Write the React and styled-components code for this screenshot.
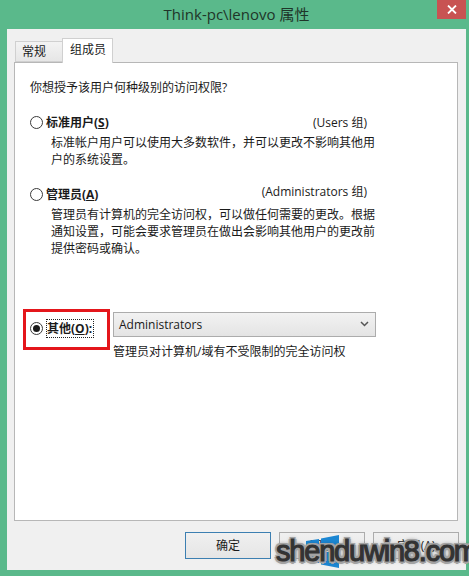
import React from "react";
import styled, { createGlobalStyle } from "styled-components";

const Global = createGlobalStyle`
  html, body { margin: 0; padding: 0; background: #5ab98b; }
  #root { width: 469px; height: 576px; }
`;

const FONT = `"Open Sans", "Noto Sans CJK SC", sans-serif`;

const Window = styled.div`
  position: relative;
  width: 469px;
  height: 576px;
  box-sizing: border-box;
  padding: 0 3px 6px 7px;
  background: #5ab98b;
  display: flex;
  flex-direction: column;
  font-family: ${FONT};
  font-size: 12px;
  color: #1a1a1a;
  overflow: hidden;
`;

const TitleBar = styled.div`
  height: 29px;
  flex: none;
  display: grid;
  grid-template-columns: 1fr auto 1fr;
  align-items: start;
`;

const Title = styled.div`
  grid-column: 2;
  font-size: 15px;
  line-height: 29px;
  color: #1f3529;
  white-space: nowrap;
`;

const CloseButton = styled.div`
  grid-column: 3;
  justify-self: end;
  width: 29px;
  height: 19px;
  background: #c85352;
  display: flex;
  align-items: center;
  justify-content: center;
`;

const Client = styled.div`
  flex: 1;
  background: #f0f0f0;
  display: flex;
  flex-direction: column;
  padding: 9px 7px 11px 7px;
  min-height: 0;
`;

const TabBar = styled.div`
  height: 24px;
  flex: none;
  display: flex;
  align-items: flex-end;
  padding-left: 1px;
`;

const Tab = styled.div`
  box-sizing: border-box;
  position: relative;
  z-index: ${(p) => (p.$active ? 1 : 0)};
  height: ${(p) => (p.$active ? 25 : 21)}px;
  width: ${(p) => (p.$active ? 51 : 47)}px;
  margin-bottom: ${(p) => (p.$active ? -1 : 0)}px;
  padding: ${(p) => (p.$active ? "2px 0 0 7px" : "1px 0 0 6px")};
  border: 1px solid #d0d0d0;
  border-right: ${(p) => (p.$active ? "1px solid #d0d0d0" : "none")};
  border-bottom: ${(p) => (p.$active ? "none" : "1px solid #d0d0d0")};
  background: ${(p) => (p.$active ? "#ffffff" : "linear-gradient(#f3f3f3, #e6e6e6)")};
  line-height: 17px;
  white-space: nowrap;
`;

const Panel = styled.div`
  flex: 1;
  background: #ffffff;
  border: 1px solid #b7b7b7;
  margin-right: 1px;
  padding: 16px 0 0 15px;
  display: flex;
  flex-direction: column;
  align-items: flex-start;
`;

const Question = styled.div`
  line-height: 17px;
`;

const OptionRow = styled.div`
  margin-top: 18px;
  width: 337px;
  display: flex;
  justify-content: space-between;
  align-items: center;
  line-height: 17px;
`;

const RadioLabel = styled.label`
  display: flex;
  align-items: center;
  gap: 3px;
  font-weight: 700;
  white-space: nowrap;
`;

const RadioCircle = styled.span`
  flex: none;
  width: 13px;
  height: 13px;
  box-sizing: border-box;
  border-radius: 50%;
  border: 1px solid #3a3a3a;
  background: #fff;
  display: inline-flex;
  align-items: center;
  justify-content: center;
  &::after {
    content: "";
    width: 7px;
    height: 7px;
    border-radius: 50%;
    background: #1a1a1a;
    display: ${(p) => (p.$checked ? "block" : "none")};
  }
`;

const GroupNote = styled.span`
  white-space: nowrap;
  margin-top: ${(p) => p.$lift || 0}px;
`;

const Desc = styled.div`
  margin: 4px 0 0 21px;
  line-height: 16.7px;
  white-space: nowrap;
`;

const OtherRow = styled.div`
  margin-top: 54px;
  display: grid;
  grid-template-columns: 83px 263px;
  align-items: start;
`;

const OtherCell = styled.div`
  position: relative;
  padding-top: 7px;
`;

const Focus = styled.span`
  border: 1px dotted #222;
  padding: 0 1px 0 0;
  line-height: 17px;
`;

const Highlight = styled.div`
  position: absolute;
  left: -7px;
  top: -3px;
  width: 87px;
  height: 41px;
  box-sizing: border-box;
  border: 3px solid #e4161b;
  pointer-events: none;
`;

const Select = styled.div`
  box-sizing: border-box;
  height: 25px;
  border: 1px solid #acacac;
  background: linear-gradient(#f2f2f2, #e4e4e4);
  display: flex;
  align-items: center;
  justify-content: space-between;
  padding: 0 6px 0 5px;
  font-size: 12px;
`;

const SelectDesc = styled.div`
  margin-top: 6px;
  line-height: 17px;
  white-space: nowrap;
`;

const ButtonRow = styled.div`
  margin-top: 11px;
  flex: none;
  display: flex;
  justify-content: flex-end;
  gap: 8px;
`;

const Button = styled.div`
  box-sizing: border-box;
  width: 86px;
  height: 27px;
  border: 1px solid ${(p) => (p.$default ? "#3c7fb1" : "#acacac")};
  background: linear-gradient(#f0f0f0, #e5e5e5);
  display: flex;
  align-items: center;
  justify-content: center;
  line-height: 17px;
`;

const WinLogo = styled.svg`
  position: absolute;
  left: 306px;
  top: 535px;
`;

const H = "#a3a3a3";

const Watermark = styled.div`
  position: absolute;
  left: 276px;
  top: 537px;
  font-family: "Liberation Sans", Arial, sans-serif;
  font-size: 29px;
  line-height: 29px;
  letter-spacing: -1.2px;
  color: #333333;
  white-space: nowrap;
  -webkit-text-stroke: 1.2px #333333;
  text-shadow: 2.5px 0 0 ${H}, -2.5px 0 0 ${H}, 0 2.5px 0 ${H}, 0 -2.5px 0 ${H},
    1.8px 1.8px 0 ${H}, -1.8px -1.8px 0 ${H}, 1.8px -1.8px 0 ${H}, -1.8px 1.8px 0 ${H},
    0 0 4px #2a2a2a;
`;

export default function App() {
  return (
    <>
      <Global />
      <Window>
        <TitleBar>
          <Title>Think-pc\lenovo 属性</Title>
          <CloseButton>
            <svg width="10" height="9" viewBox="0 0 10 9">
              <path d="M1 0.5 L9 8.5 M9 0.5 L1 8.5" stroke="#fff" strokeWidth="1.8" />
            </svg>
          </CloseButton>
        </TitleBar>
        <Client>
          <TabBar>
            <Tab>常规</Tab>
            <Tab $active>组成员</Tab>
          </TabBar>
          <Panel>
            <Question>你想授予该用户何种级别的访问权限?</Question>

            <OptionRow>
              <RadioLabel>
                <RadioCircle />
                <span>
                  标准用户(<u>S</u>)
                </span>
              </RadioLabel>
              <GroupNote $lift={-1}>(Users 组)</GroupNote>
            </OptionRow>
            <Desc>
              标准帐户用户可以使用大多数软件，并可以更改不影响其他用
              <br />
              户的系统设置。
            </Desc>

            <OptionRow>
              <RadioLabel>
                <RadioCircle />
                <span>
                  管理员(<u>A</u>)
                </span>
              </RadioLabel>
              <GroupNote $lift={-6}>(Administrators 组)</GroupNote>
            </OptionRow>
            <Desc>
              管理员有计算机的完全访问权，可以做任何需要的更改。根据
              <br />
              通知设置，可能会要求管理员在做出会影响其他用户的更改前
              <br />
              提供密码或确认。
            </Desc>

            <OtherRow>
              <OtherCell>
                <RadioLabel>
                  <RadioCircle $checked />
                  <Focus>
                    其他(<u>O</u>):
                  </Focus>
                </RadioLabel>
                <Highlight />
              </OtherCell>
              <div>
                <Select>
                  <span>Administrators</span>
                  <svg width="9" height="6" viewBox="0 0 9 6">
                    <path d="M1 1 L4.5 4.5 L8 1" stroke="#555" strokeWidth="1.5" fill="none" />
                  </svg>
                </Select>
                <SelectDesc>管理员对计算机/域有不受限制的完全访问权</SelectDesc>
              </div>
            </OtherRow>
          </Panel>
          <ButtonRow>
            <Button $default>确定</Button>
            <Button>取消</Button>
            <Button>应用(A)</Button>
          </ButtonRow>
        </Client>
        <WinLogo width="33" height="33" viewBox="0 0 33 33">
          <path d="M0 6 L13 4 L13 15 L0 15 Z" fill="#1b86d2" />
          <path d="M15 3.6 L33 0 L33 15 L15 15 Z" fill="#1b86d2" />
          <path d="M0 17 L13 17 L13 28 L0 26 Z" fill="#1b86d2" />
          <path d="M15 17 L33 17 L33 33 L15 29.5 Z" fill="#1b86d2" />
        </WinLogo>
        <Watermark>shenduwin8.com</Watermark>
      </Window>
    </>
  );
}
